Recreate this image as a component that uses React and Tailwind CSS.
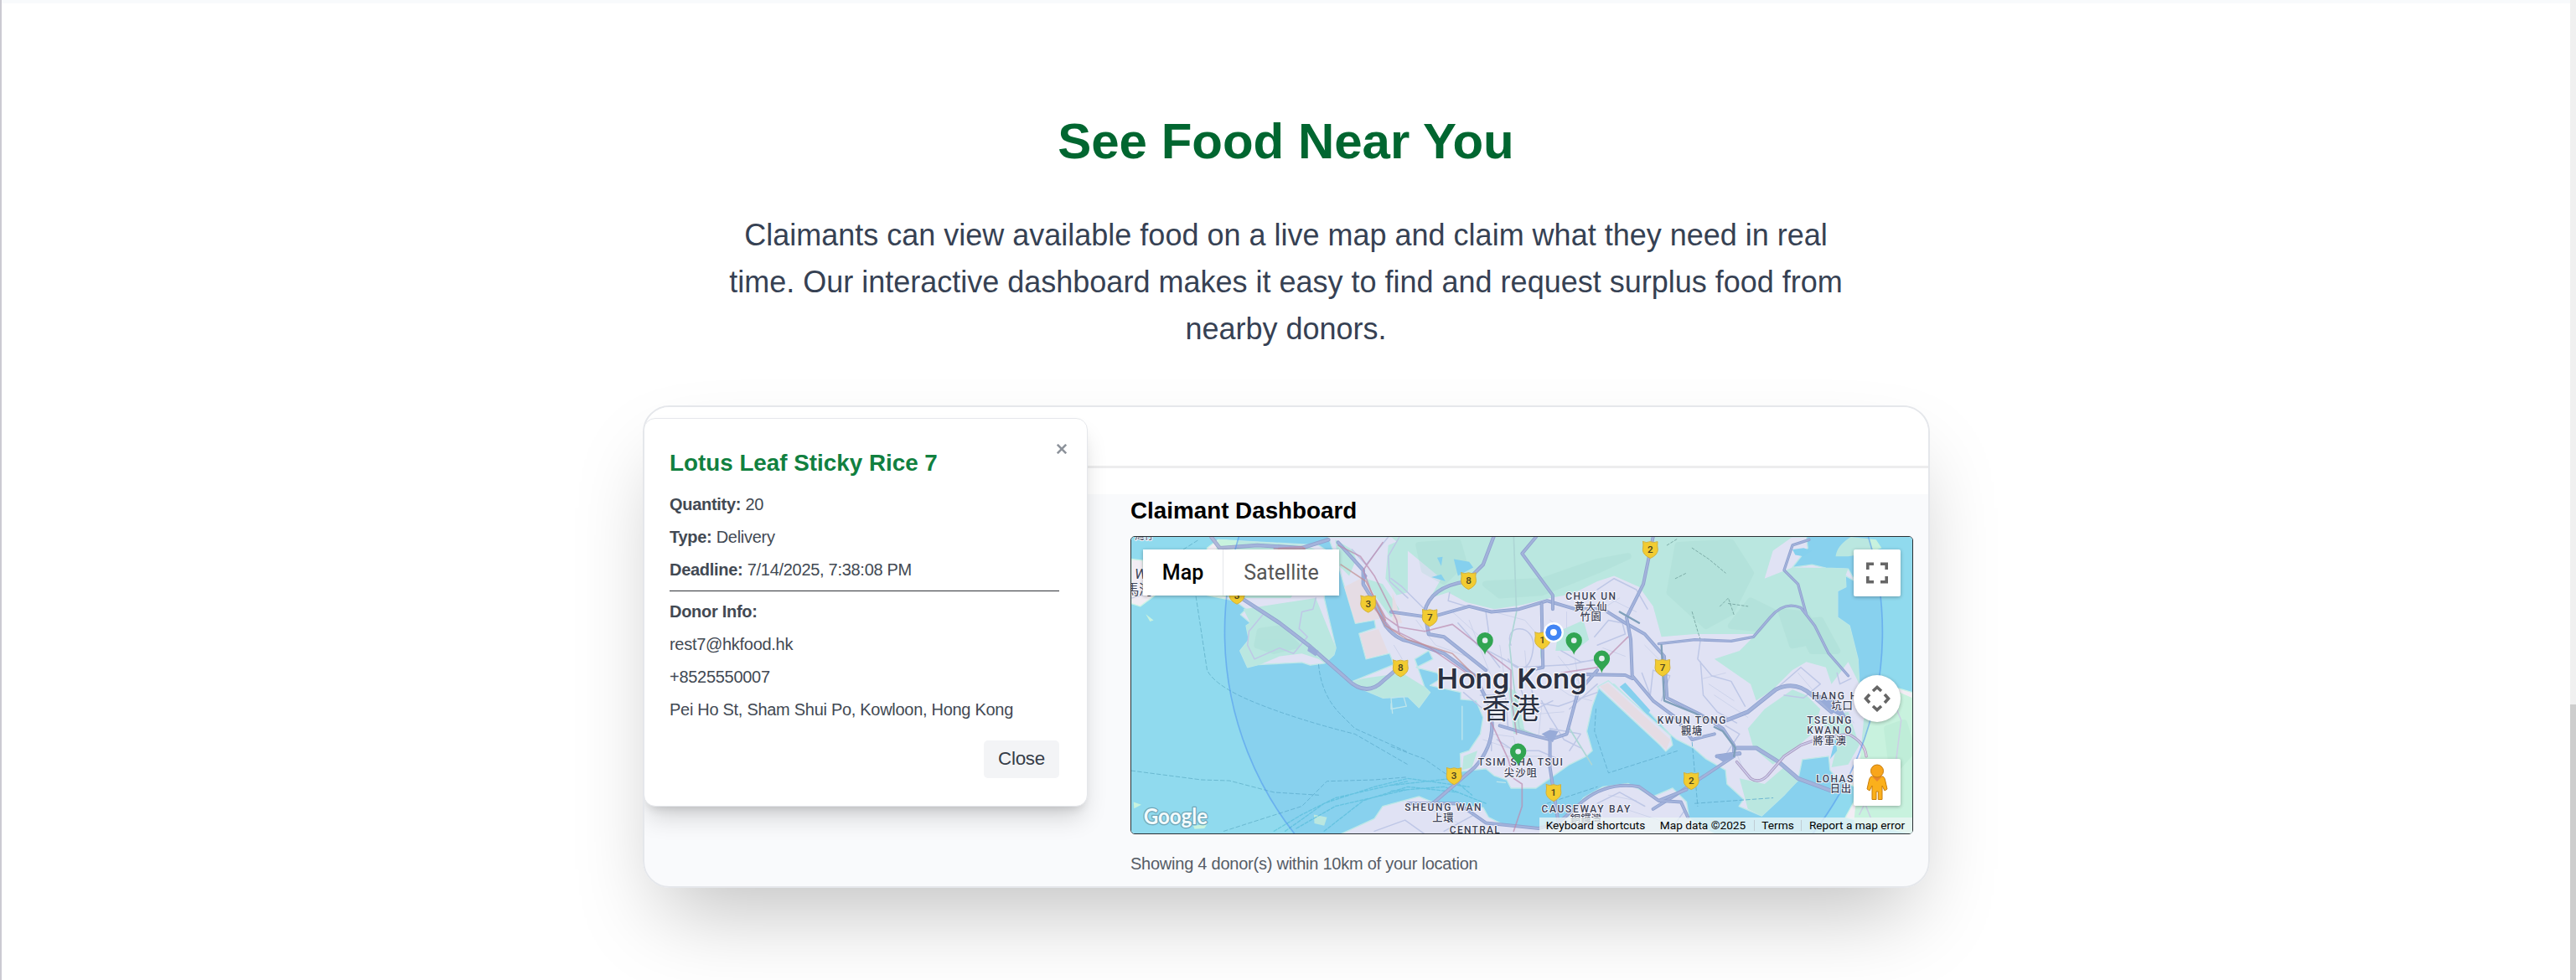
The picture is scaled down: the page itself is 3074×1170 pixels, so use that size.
import React from "react";

const WATER = "#90daee";
const CITY = "#f2edf4";
const GREEN = "#c8f2de";

const land = [
  // Tsing Yi
  "M300 70L340 40L700 60L745 90L720 250L762 430L755 455L722 485L670 492L640 482L485 490L445 500L418 440L450 400L440 350L455 340L420 310L440 290L400 260L300 240Z",
  // Mainland
  "M735 30L2450 30L2455 70L2400 140L2470 130L2520 142L2600 145L2625 190L2590 170L2592 210L2562 225L2562 320L2605 350L2635 470L2640 560L2700 565L2760 570L2830 590L2830 1100L2590 1040L2620 985L2625 930L2560 900L2535 870L2530 820L2435 832L2420 905L2370 960L2290 1035L2208 1000L2225 975L2165 920L2160 870L2090 830L2045 790L1985 760L1960 740L1890 665L1840 640L1760 560L1705 575L1682 640L1662 730L1682 800L1660 820L1600 850L1530 900L1480 935L1390 935L1375 905L1330 890L1300 865L1210 875L1208 810L1240 800L1280 740L1290 680L1265 620L1210 615L1210 590L1100 565L1140 540L1125 520L1050 500L1110 470L1095 440L1045 470L1080 570L1100 590L1060 645L1020 605L930 610L860 580L810 555L970 490L955 450L870 470L845 378L905 358L900 330L832 342L790 200L770 130Z",
  // Runway
  "M1700 570L1740 548L1962 745L1970 780L1945 802L1925 780Z",
  // Hong Kong island
  "M780 1100L900 1045L930 1000L1060 965L1120 990L1290 1005L1310 1040L1360 1065L1490 1078L1600 1035L1650 970L1720 930L1810 918L1900 965L1970 935L2020 985L2030 1045L2120 1100Z",
  "M28 110L70 115L75 200L120 235L60 280L28 270Z",
];

const greens = [
  "M340 40L650 60L700 80L600 250L400 250L300 240ZM430 290L690 250L762 430L755 455L722 485L700 470L640 450L560 460L490 490L445 500L418 440L450 400L440 350L455 340Z",
  "M760 40L820 75L835 110L810 170L770 130ZM960 30L1140 180L1100 250L1165 230L1230 265L1330 290L1430 275L1530 250L1610 235L1700 190L1760 170L1850 210L1900 280L1930 390L2050 380L2270 380L2210 440L2120 470L2250 560L2270 620L2330 580L2400 510L2450 480L2520 500L2540 560L2600 480L2640 560L2635 470L2605 350L2562 320L2562 225L2592 210L2590 170L2600 145L2520 142L2400 140L2300 180L2330 80L2400 30Z",
  "M870 180L930 200L990 290L960 320L900 240ZM950 60L1020 30L1020 230L980 240L940 180Z",
  "M2240 720L2300 650L2400 580L2450 600L2500 650L2470 740L2400 800L2330 850L2260 790ZM2500 690L2600 660L2640 780L2600 850L2540 860L2560 780ZM2210 900L2300 920L2370 860L2430 900L2370 960L2290 1035L2240 1010Z",
  "M2660 640L2740 570L2830 610L2830 1100L2620 1060L2640 860Z",
  "M860 540L1000 520L1080 570L1100 590L1060 645L1020 605L930 610L860 580L810 555Z",
  "M1560 370L1650 330L1670 400L1620 440L1550 440ZM1220 820L1270 800L1250 860L1215 870ZM1380 570L1410 590L1440 730L1400 740Z",
];

const shades = [
  "M1060 60L1200 50L1220 120L1150 190L1080 150ZM1300 200L1500 190L1700 120L1810 100L1700 150L1500 230L1350 240Z",
  "M1990 60L2180 50L2250 160L2180 300L2090 350L1960 230ZM2250 260L2330 300L2280 360L2180 350Z",
  "M2360 300L2450 310L2500 400L2400 420ZM490 370L560 360L620 420L540 440L480 420Z",
  "M2740 720L2800 700L2830 800L2760 880ZM2420 340L2500 330L2560 440L2470 440Z",
];

const minorRoads = [
  "M28 250L120 230M500 310L450 370L445 420L470 470L560 430L610 450L660 390L630 360L640 300L680 290L690 250M820 75L870 130L950 30M990 30L950 100L955 190L1020 250",
  "M960 180L1000 210L1080 290M1170 230L1165 260L1230 280M1300 300L1310 370L1290 420L1350 500M1390 420C1360 340 1480 340 1470 430S1410 520 1380 470M1420 560L1440 620L1560 640L1700 590M1200 340L1270 420L1420 500L1600 490L1700 470M1570 440L1640 480L1720 470M1500 620L1530 680L1580 760L1640 790M1340 760L1400 800L1490 800L1560 830M1320 770L1320 800M1530 720L1640 740L1600 800M1690 390L1740 330L1790 340L1800 380L1700 420M1700 220L1760 180L1840 220L1880 290",
  "M1280 600L1370 600L1380 720M1220 590L1290 650M1460 560L1480 650L1540 620M1600 650L1700 560M1860 520L1890 600L1900 510L1960 530L1930 620M2070 480L2080 600L2130 660L2200 700M2070 400L2060 470L2110 530L2180 550L2230 640M2160 710L2210 740L2150 830M2350 570L2430 500L2500 560L2440 610L2370 600M2560 520L2570 560L2610 540M2740 570L2790 690L2770 850M2640 1030L2660 990L2680 1040M900 1090L1010 1050L1080 1100M1150 1090L1260 1030M1700 990L1780 950L1870 1000M1960 1090L2010 1020",
];

const streets =
  "M1240 330L1330 560M1180 300L1290 400M1330 300L1440 330L1500 400M1350 420L1370 560M1440 440L1450 560M1530 330L1600 380M1560 460L1640 560M1590 300L1590 360M1460 670L1580 660M1320 740L1400 750L1420 850M1290 760L1380 790M1360 820L1500 820M1500 640L1490 740M1540 560L1600 600L1680 620M1620 470L1640 600M1720 430L1800 460M1740 250L1840 300M1700 300L1780 250M1870 420L1930 480M1050 330L1120 420L1230 460M970 420L1000 470M2100 560L2190 620M2120 600L2240 680M2080 540L2160 520M2180 760L2220 860M2560 620L2620 700M2420 520L2480 590M1100 1010L1200 1060M1060 1010L1160 1000M1740 960L1840 980M1800 1010L1950 1060";

const majorRoads = [
  ["M315 30L345 70L480 60L640 70L735 40M430 255L560 340L670 425L800 540Q870 610 930 550L1000 490", 13],
  ["M770 50L860 150L860 200L905 275L940 350Q980 400 1020 405L1150 450L1260 530L1310 630Q1350 760 1260 860L1110 990M1328 30L1290 130L1230 190Q1100 210 1080 300L1095 380L1150 390L1300 510", 12],
  ["M960 300L1100 320L1240 280L1320 300L1420 290L1520 260L1620 290L1720 290L1800 340L1870 380L1940 460L1950 610L2070 670L2150 720L2190 780L2190 820L1980 960L1900 1010", 11],
  ["M1480 30L1430 90L1540 240L1540 290M1500 270L1505 500L1460 510M1900 30L1865 200L1805 320L1820 400L1825 530L1900 620L1980 680L2040 760L2120 740M1640 525L1800 528L1825 540M1350 710L1450 740L1530 760L1590 740L1630 590L1700 510", 11],
  ["M1530 740L1530 860L1550 990L1560 1060L1490 1080L1300 1060L1200 990L1020 990M1560 1060L1650 980Q1740 910 1850 930L1920 980L2020 940M1920 980L2000 985L2025 1040", 11],
  ["M2165 690L2240 660L2340 580Q2410 545 2470 600L2540 660M2195 790L2270 790L2350 840L2420 900L2540 945M2130 820L2210 810", 14],
  ["M1920 415L2050 400L2180 405L2260 390L2320 320Q2370 260 2430 285L2480 350L2530 450L2600 530M2460 40L2400 60L2370 150L2420 200L2450 310", 9],
];

const rail =
  "M540 72L640 65L650 72M770 60L850 100L900 170L980 330L990 380M930 50L860 150L890 230L940 320L990 355L1080 370L1180 345L1390 510L1390 600L1410 740M890 275L960 360L1100 430L1230 520M1320 700L1380 830L1400 900L1430 920L1430 1000L1400 1090M1570 520L1700 500L1810 390";

const ferry =
  "M260 245L300 510Q330 570 480 630T830 740L1020 850M28 872L280 905L380 908L540 950L700 960M700 490Q710 600 780 670L830 720L1020 805M360 1090L640 1000L730 910L900 905L1020 895M960 785L1080 830L1180 900M1695 650L1690 730L1740 880L1990 800M1520 990L1700 930M2050 990L2330 970M215 75L270 40M2040 770L2060 1000";

const ferryDense =
  "M540 1090L640 1030L760 970L1020 910M580 1090L720 990L900 930L1020 900L1240 930M720 1090L860 980L1020 930L1200 950M960 925L1180 900L1250 960M960 945L1150 930L1300 990M620 1080L760 1000L1020 940";

const shields = [
  [407, 240, "3"], [878, 270, "3"], [994, 502, "8"], [1238, 187, "8"], [1099, 320, "7"],
  [1503, 402, "1"], [1890, 75, "2"], [1934, 500, "7"], [1186, 890, "3"], [1543, 950, "1"], [2037, 908, "2"],
];

const pins = [[1297, 455], [1616, 455], [1716, 520], [1416, 855]];

// x (centre), y (baseline), text, width
const labels = [
  [1676, 256, "CHUK UN", 180], [1424, 854, "TSIM SHA TSUI", 304], [1146, 1017, "SHEUNG WAN", 274],
  [1659, 1024, "CAUSEWAY BAY", 318], [1260, 1098, "CENTRAL", 180], [2038, 703, "KWUN TONG", 246],
  [2532, 703, "TSEUNG", 160], [2532, 740, "KWAN O", 160],
];
const cjkLabels = [
  [1676, 295, "黃大仙", 116], [1676, 333, "竹園", 76], [1424, 893, "尖沙咀", 118], [1146, 1056, "上環", 76],
  [1659, 1060, "銅鑼灣", 112], [2038, 743, "觀塘", 76], [2533, 779, "將軍澳", 118],
];

function CityMap() {
  return (
    <svg
      className="block h-full w-full"
      viewBox="28 30 2802 1068"
      preserveAspectRatio="none"
      fontFamily='Roboto, "Noto Sans CJK TC", sans-serif'
      strokeLinejoin="round"
      strokeLinecap="round"
    >
      <rect x="28" y="30" width="2802" height="1068" fill={WATER} />
      {land.map((d) => <path key={d} d={d} fill={CITY} stroke="#cdf3e6" strokeWidth="4" />)}
      {greens.map((d) => <path key={d} d={d} fill={GREEN} />)}
      <g fill="#9fdcc2" opacity="0.2">{shades.map((d) => <path key={d} d={d} stroke="#9fdcc2" strokeWidth="24" />)}</g>
      <path d="M2555 100Q2560 60 2610 30L2700 40L2720 70L2660 90L2600 100ZM683 1030L730 1040L720 1070L685 1062ZM80 308L108 330L95 335ZM36 985L64 995L38 1008ZM250 1070L300 1065L290 1080L255 1082Z" fill={GREEN} />
      <path d="M792 210L850 180L905 280L920 325L832 340ZM848 380L915 362L950 448L872 468ZM965 230L1000 340L965 340ZM1708 568L1738 556L1962 760L1948 796Z" fill="#f8e6e3" />
      <path d="M1105 175L1155 190L1140 165M1185 110L1240 120L1255 140L1200 170ZM1125 105L1145 102L1140 135ZM2400 75L2440 70L2470 80L2440 100L2410 95ZM1780 570L1800 555L1890 655L1880 670ZM2555 750L2535 830L2560 800Z" fill="#8dd8ee" />
      <path d="M28 250L80 232M960 630L960 650L1015 640L1005 605L960 610L965 665M1215 640V760M1370 915L1340 912" fill="none" stroke="#cdf0ea" strokeWidth="4" />
      <path d={streets} fill="none" stroke="#dcdbea" strokeWidth="3" />
      <g fill="none" stroke="#ccceE5" strokeWidth="4.5">{minorRoads.map((d) => <path key={d} d={d} />)}</g>
      <path d="M1400 30L1410 300L1385 420L1400 560L1420 720L1520 760M1520 350Q1490 430 1500 470M1600 720L1680 850" fill="none" stroke="#b9dfd2" strokeWidth="5" />
      <g fill="none" strokeWidth="2.5" strokeDasharray="9 7">
        <path d="M1950 60L1990 35M2040 70L2100 110L2160 160M2040 300L2060 370L2070 400M2140 280L2170 250L2190 310M2170 270L2240 280M1980 180L2020 160" stroke="#77a394" />
        <path d={ferry} stroke="#62b2ca" strokeDasharray="14 9" />
      </g>
      <path d={ferryDense} fill="none" stroke="#5fc4da" strokeWidth="4" strokeDasharray="12 6" opacity="0.8" />
      {majorRoads.map(([d, w]) => (
        <g key={d} fill="none">
          <path d={d} stroke="#98a4cb" strokeWidth={w + 1} />
          <path d={d} stroke="#aeb8d9" strokeWidth={w - 4} />
        </g>
      ))}
      <path d="M2120 820L2180 805L2195 825L2150 840ZM2470 590L2540 660L2600 690L2560 620ZM1500 740L1540 770L1560 730L1530 725ZM665 420L700 440L690 460L660 440ZM860 150L875 170L855 210Z" fill="#a2afd5" />
      <path d="M1930 420L1940 620L2050 665L2100 690M2120 715L2150 730L2195 790L2190 820M1780 300L1850 340" fill="none" stroke="#86a2b4" strokeWidth="7" />
      <path d={rail} fill="none" stroke="#c98aa6" strokeWidth="5" opacity="0.7" />
      <path d="M890 260L940 350L1020 400L1180 450L1270 540M650 72L560 74L530 80M780 130L870 190L940 330" fill="none" stroke="#d28d84" strokeWidth="5" opacity="0.7" />
      <path d="M2200 840L2250 900Q2280 920 2310 890L2370 820L2430 780L2500 755L2600 740Q2660 770 2665 820" fill="none" stroke="#b598b8" strokeWidth="10" />
      <path d="M2200 840L2250 900Q2280 920 2310 890L2370 820L2430 780L2500 755L2600 740Q2660 770 2665 820" fill="none" stroke="#d9d2e8" strokeWidth="5" />
      <circle cx="1543" cy="372" r="1180" fill="#4285f4" fillOpacity="0.1" stroke="#4f93ee" strokeOpacity="0.55" strokeWidth="5" />

      {shields.map(([x, y, n]) => (
        <g key={x} transform={`translate(${x} ${y})`}>
          <path d="M-26 -28Q-14 -22 0 -28Q14 -22 26 -28Q24 -16 27 2Q26 20 0 32Q-26 20 -27 2Q-24 -16 -26 -28Z" fill="#f2cc31" stroke="#d3b13a" strokeWidth="3" />
          <text y="12" textAnchor="middle" fontSize="35" fontWeight="500" fill="#4b4420">{n}</text>
        </g>
      ))}

      <g fill="#3d4357" stroke="#f6f6fb" strokeWidth="6" style={{ paintOrder: "stroke" }} fontWeight="500">
        <g fontSize="36" textAnchor="middle">
          {labels.map(([x, y, t, w]) => <text key={t} x={x} y={y} textLength={w}>{t}</text>)}
          {cjkLabels.map(([x, y, t, w]) => <text key={t} x={x} y={y} fontSize="37" textLength={w}>{t}</text>)}
        </g>
        <g fontSize="36">
          <text x="2470" y="615" textLength="162">HANG H</text>
          <text x="2540" y="653" fontSize="37" textLength="76">坑口</text>
          <text x="2485" y="913" textLength="132">LOHAS</text>
          <text x="2535" y="951" fontSize="37" textLength="76">日出</text>
          <text x="40" y="180" fontSize="52" fontStyle="italic" fontWeight="400">W</text>
          <text x="6" y="238" fontSize="50" fontWeight="400">馬灣</text>
          <text x="40" y="38" fontSize="36" fontWeight="400">灣仔</text>
        </g>
        <g fill="#2b3142" strokeWidth="8">
          <text x="1124" y="576" fontSize="100" textLength="538" lengthAdjust="spacingAndGlyphs">Hong Kong</text>
          <text x="1286" y="686" fontSize="102" fontWeight="400" textLength="208">香港</text>
        </g>
      </g>

      {pins.map(([x, y]) => (
        <g key={x} transform={`translate(${x} ${y})`}>
          <path d="M0 0C-4 -22 -29 -28 -29 -52A29 29 0 0 1 29 -52C29 -28 4 -22 0 0Z" fill="#31a552" />
          <circle cy="-52" r="10" fill="#e3eef0" />
        </g>
      ))}
      <circle cx="1543" cy="374" r="36" fill="#fff" />
      <circle cx="1543" cy="374" r="29" fill="#4285f4" />
      <circle cx="1543" cy="374" r="12" fill="#fff" />
      <text x="72" y="1064" fontSize="78" fontFamily="Lato, sans-serif" fontWeight="700" fill="#f3fbfd" stroke="#6fa7b8" strokeWidth="8" style={{ paintOrder: "stroke" }} textLength="230" lengthAdjust="spacingAndGlyphs">Google</text>
    </svg>
  );
}

function Row({ label, children }) {
  return (
    <p className="h-[38.8px] leading-[37px]">
      {label && <strong>{label}</strong>} {children}
    </p>
  );
}

function DonationPopup() {
  return (
    <div className="absolute top-[13px] -left-px h-[464px] w-[530px] rounded-[14px] border border-gray-200 bg-white pl-[30px] pr-[33px] text-[20px] tracking-[-0.29px] text-[#424953] shadow-[0_18px_30px_-6px_rgba(0,0,0,0.16),0_8px_12px_-6px_rgba(0,0,0,0.14)]">
      <svg className="absolute top-[30px] right-[24px] size-[12px]" viewBox="0 0 12 12" stroke="#8d939b" strokeWidth="2.6">
        <path d="M.8 .8L11.2 11.2M11.2 .8L.8 11.2" />
      </svg>
      <h3 className="mt-[33px] h-[51px] text-[27.8px] leading-[40px] font-bold tracking-normal text-[#11803f]">Lotus Leaf Sticky Rice 7</h3>
      <Row label="Quantity:">20</Row>
      <Row label="Type:">Delivery</Row>
      <Row label="Deadline:">7/14/2025, 7:38:08 PM</Row>
      <hr className="mt-[5px] mb-[6px] border-t border-[#2f3338]" />
      <Row label="Donor Info:" />
      <Row>rest7@hkfood.hk</Row>
      <Row>+8525550007</Row>
      <Row>Pei Ho St, Sham Shui Po, Kowloon, Hong Kong</Row>
      <div className="mt-[16px] flex justify-end">
        <button className="h-[45px] w-[90px] rounded-[5px] bg-gray-100 text-[22.4px] text-[#363d48]">Close</button>
      </div>
    </div>
  );
}

const control = "flex size-[56px] items-center justify-center bg-white shadow-[0_1px_4px_rgba(0,0,0,0.3)]";

function MapPanel() {
  return (
    <div className="relative h-[356px] w-[934px] overflow-hidden rounded-[5px] border border-[#2b3034] font-[Roboto]">
      <CityMap />
      <div className="absolute top-[15px] left-[14px] flex h-[55px] bg-white text-[25px] shadow-[0_1px_4px_rgba(0,0,0,0.3)]">
        <div className="flex w-[96px] items-center justify-center border-r border-gray-200 font-medium text-black">Map</div>
        <div className="flex w-[138px] items-center justify-center text-[#565656]">Satellite</div>
      </div>
      <div className="absolute top-[15px] right-[14px] flex flex-col">
        <div className={`${control} rounded-[2px]`}>
          <svg className="size-[28px]" viewBox="0 0 28 28" fill="none" stroke="#666" strokeWidth="3.6">
            <path d="M2.800 10V3.300H10M18 3.300H25.200V10M25.200 18V24.700H18M10 24.700H2.800V18" />
          </svg>
        </div>
        <div className={`${control} mt-[94px] rounded-full`}>
          <svg className="size-[34px]" viewBox="0 0 34 34" fill="none" stroke="#666" strokeWidth="3.6">
            <path d="M12 8L17 3.500L22 8M12 26L17 30.500L22 26M8 12L3.500 17L8 22M26 12L30.500 17L26 22" />
          </svg>
        </div>
        <div className={`${control} mt-[44px] rounded-[2px]`}>
          <svg className="h-[44px] w-[26px]" viewBox="0 0 26 44">
            <path d="M6 15H20Q22 16 22.500 19L25 30L22 32L19 26V42.500H14.300V33H12V42.500H7V26L4 32L1 30L3.500 19Q4 16 6 15Z" fill="#fbb01b" stroke="#c77d0d" />
            <path d="M7 15L13 21L19 15Z" fill="#e8862c" />
            <circle cx="13" cy="8.500" r="7.500" fill="#f8a51b" stroke="#c77d0d" />
          </svg>
        </div>
      </div>
      <div className="absolute right-0 bottom-0 flex h-[19px] items-center bg-[#edf5f6]/75 text-[13.7px] leading-none text-black">
        <span className="w-[136px] pr-[2px] text-center">Keyboard shortcuts</span>
        <span className="w-[120px] pr-[2px] text-center">Map data ©2025</span>
        <span className="w-[56px] border-l border-[#c0ccd4] text-center">Terms</span>
        <span className="w-[133px] border-l border-[#c0ccd4] text-center">Report a map error</span>
      </div>
    </div>
  );
}

export default function App() {
  return (
    <div className="flex h-[1170px] w-full overflow-hidden border-l-2 border-[#cbcad2] bg-white font-['Liberation_Sans',Arial,sans-serif]">
      <section className="flex flex-1 flex-col items-center border-t-4 border-slate-50">
        <h2 className="mt-[129px] text-[60px] leading-[72px] font-bold text-[#016630]">See Food Near You</h2>
        <p className="mt-12 w-[1344px] text-center text-[36px] leading-[56px] text-[#364153]">
          Claimants can view available food on a live map and claim what they need in real time. Our interactive
          dashboard makes it easy to find and request surplus food from nearby donors.
        </p>
        <div className="mt-[63px] ml-px w-[1536px] rounded-[32px] shadow-[0_50px_100px_-24px_rgba(0,0,0,0.25)]">
          <div className="relative h-[576px] overflow-hidden rounded-[32px] border-2 border-gray-200 bg-[#f9fafc]">
            <div className="h-[104px] bg-white">
              <div className="h-[73px] border-b-[3px] border-[#ededee]" />
            </div>
            <DonationPopup />
            <main className="ml-[580px]">
              <h3 className="h-[50px] pt-px text-[27.8px] leading-[38px] font-bold text-black">Claimant Dashboard</h3>
              <MapPanel />
              <p className="mt-[20px] text-[20px] leading-[30px] tracking-[-0.24px] text-[#555c66]">Showing 4 donor(s) within 10km of your location</p>
            </main>
          </div>
        </div>
      </section>
      <div className="w-[7px] bg-[#f0f0f0] pt-[841px]">
        <div className="h-full bg-[#cdcdcd]" />
      </div>
    </div>
  );
}
